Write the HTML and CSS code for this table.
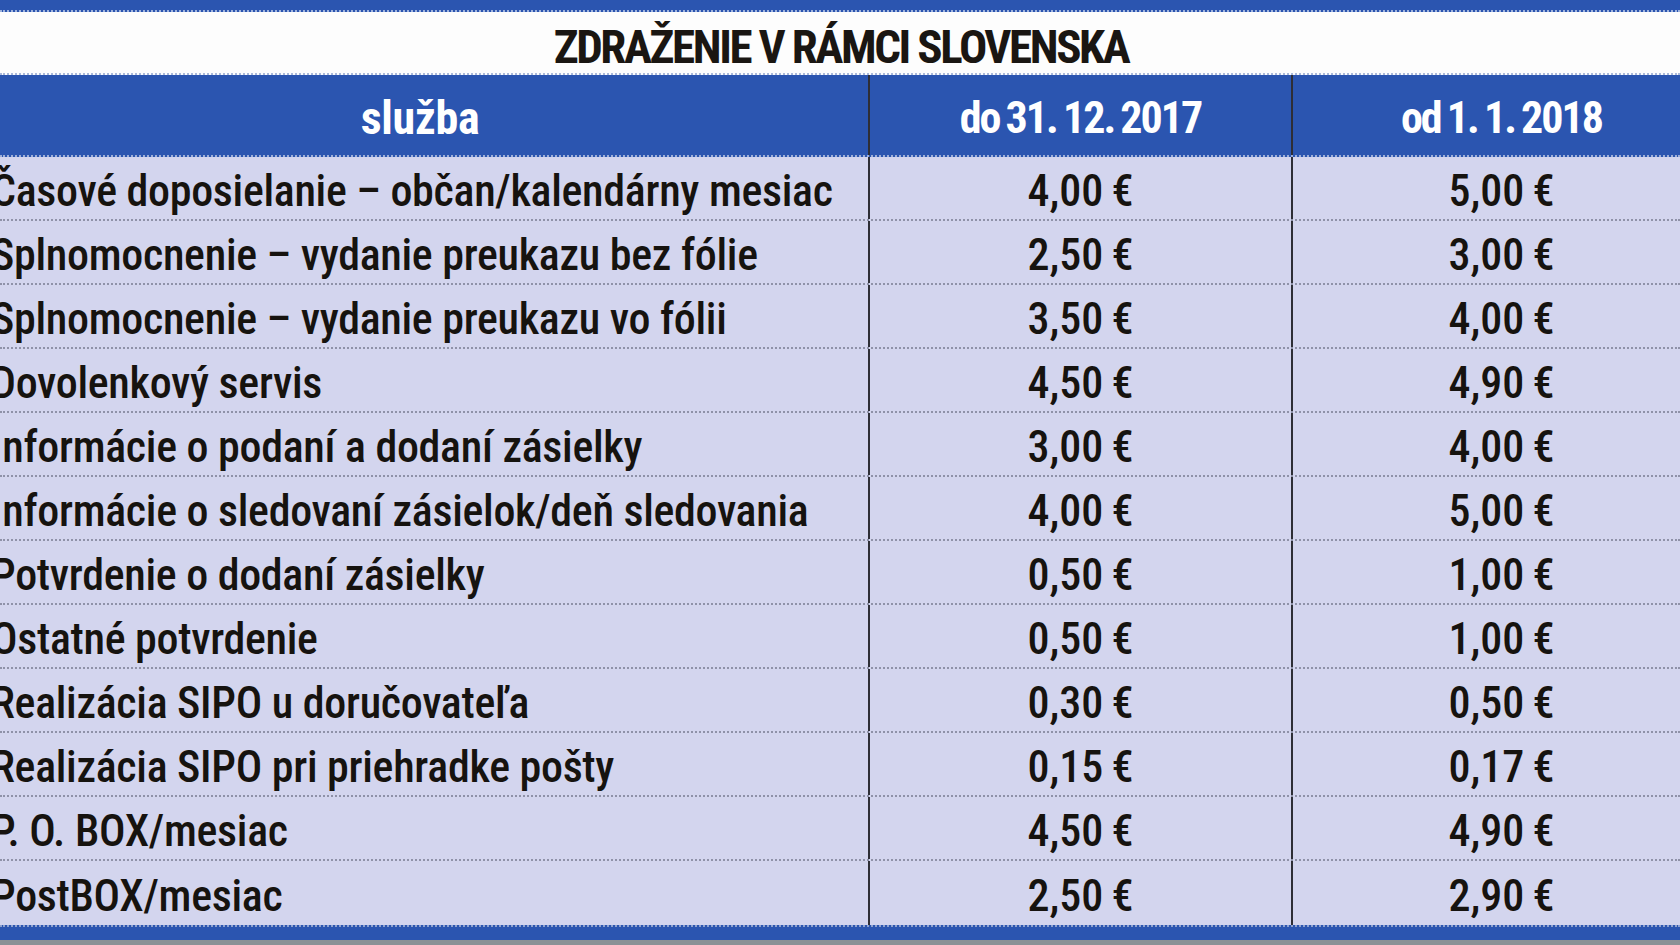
FILE: index.html
```html
<!DOCTYPE html>
<html lang="sk">
<head>
<meta charset="utf-8">
<title>Zdraženie v rámci Slovenska</title>
<link rel="stylesheet" href="styles.css">
</head>
<body>
<div class="page">
  <div class="topbar"></div>
  <div class="title">ZDRAŽENIE V RÁMCI SLOVENSKA</div>
  <div class="table">
    <div class="row head">
      <div class="cell c1">služba</div>
      <div class="cell c2 date">do 31. 12. 2017</div>
      <div class="cell c3 date">od 1. 1. 2018</div>
    </div>
    <div class="row"><div class="cell c1">Časové doposielanie – občan/kalendárny mesiac</div><div class="cell c2">4,00 €</div><div class="cell c3">5,00 €</div></div>
    <div class="row"><div class="cell c1">Splnomocnenie – vydanie preukazu bez fólie</div><div class="cell c2">2,50 €</div><div class="cell c3">3,00 €</div></div>
    <div class="row"><div class="cell c1">Splnomocnenie – vydanie preukazu vo fólii</div><div class="cell c2">3,50 €</div><div class="cell c3">4,00 €</div></div>
    <div class="row"><div class="cell c1">Dovolenkový servis</div><div class="cell c2">4,50 €</div><div class="cell c3">4,90 €</div></div>
    <div class="row"><div class="cell c1">Informácie o podaní a dodaní zásielky</div><div class="cell c2">3,00 €</div><div class="cell c3">4,00 €</div></div>
    <div class="row"><div class="cell c1">Informácie o sledovaní zásielok/deň sledovania</div><div class="cell c2">4,00 €</div><div class="cell c3">5,00 €</div></div>
    <div class="row"><div class="cell c1">Potvrdenie o dodaní zásielky</div><div class="cell c2">0,50 €</div><div class="cell c3">1,00 €</div></div>
    <div class="row"><div class="cell c1">Ostatné potvrdenie</div><div class="cell c2">0,50 €</div><div class="cell c3">1,00 €</div></div>
    <div class="row"><div class="cell c1">Realizácia SIPO u doručovateľa</div><div class="cell c2">0,30 €</div><div class="cell c3">0,50 €</div></div>
    <div class="row"><div class="cell c1">Realizácia SIPO pri priehradke pošty</div><div class="cell c2">0,15 €</div><div class="cell c3">0,17 €</div></div>
    <div class="row"><div class="cell c1">P. O. BOX/mesiac</div><div class="cell c2">4,50 €</div><div class="cell c3">4,90 €</div></div>
    <div class="row last"><div class="cell c1">PostBOX/mesiac</div><div class="cell c2">2,50 €</div><div class="cell c3">2,90 €</div></div>
  </div>
  <div class="bottombar"></div>
</div>
</body>
</html>
```

FILE: styles.css
```css
html, body {
  margin: 0;
  padding: 0;
  background: #8a9196;
}
.page {
  width: 1680px;
  height: 945px;
  overflow: hidden;
  display: flex;
  flex-direction: column;
  font-family: "Liberation Sans Narrow", "Roboto Condensed", "Liberation Sans", sans-serif;
  color: #16130f;
}
.topbar {
  height: 12px;
  background: #2b55b0;
  border-bottom: 2px dotted #9fb3dd;
  box-sizing: border-box;
}
.title {
  height: 63px;
  background: #fdfdfd;
  display: flex;
  align-items: center;
  justify-content: center;
  padding-top: 7px;
  padding-left: 2px;
  box-sizing: border-box;
  font-weight: bold;
  font-size: 47px;
  letter-spacing: -2.4px;
  color: #1a1612;
  border-bottom: 2px dotted #a9b8da;
}
.table {
  display: flex;
  flex-direction: column;
  background: #d3d5ee;
}
.row {
  display: grid;
  grid-template-columns: 868px 423px 1fr;
  height: 64px;
  box-sizing: border-box;
  border-bottom: 2px dotted #8f92a8;
}
.row.last {
  border-bottom: none;
}
.row.head {
  height: 82px;
  background: #2b55b0;
  color: #ffffff;
  border-bottom: 2px dotted #9fb0d8;
}
.cell {
  display: flex;
  align-items: center;
  font-size: 44px;
  font-weight: 500;
  white-space: nowrap;
  padding-top: 5px;
  box-sizing: border-box;
}
.c1 {
  text-indent: -9px;
  letter-spacing: -0.3px;
}
.c2 {
  justify-content: center;
  border-left: 2px solid #2e2e36;
  word-spacing: -2px;
}
.c3 {
  justify-content: center;
  border-left: 2px solid #2e2e36;
  padding-left: 30px;
  word-spacing: -2px;
}
.head .cell {
  font-weight: bold;
  font-size: 46px;
  padding-top: 6px;
}
.head .c1 {
  justify-content: center;
  text-indent: 0;
  padding-right: 28px;
}
.head .date {
  font-size: 44px;
  letter-spacing: -2px;
  word-spacing: -2px;
}
.bottombar {
  height: 15px;
  background: #2b55b0;
  border-top: 2px dotted #8ea2cf;
  box-sizing: border-box;
}
```
